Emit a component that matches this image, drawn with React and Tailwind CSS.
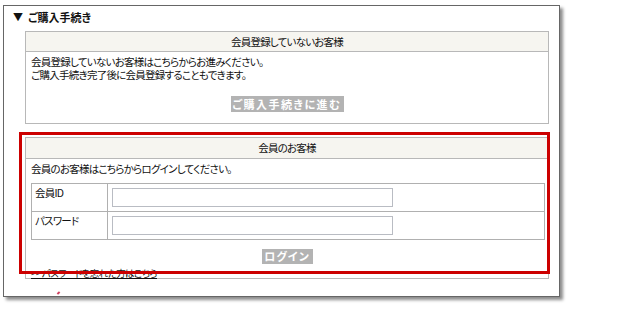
export default function App() {
  const jp = "font-['MS_PGothic','Noto_Sans_CJK_JP',sans-serif] [font-feature-settings:'palt']";
  return (
    <div className={`relative h-[309px] w-[630px] overflow-hidden bg-white text-[#111] ${jp}`}>
      <div className="ml-[3px] mt-[5px] h-[292px] w-[557px] border border-[#666] bg-white shadow-[3px_3px_3px_rgba(0,0,0,0.45)]">
        <h2 className="flex h-[25px] items-start pl-[9px] pt-[3px] text-[11px] font-bold leading-[16px]">
          <span className="mr-[5px] text-[10px]">▼</span>
          <span>ご購入手続き</span>
        </h2>

        <div className="ml-[21px] w-[524px] border border-[#b8b8b8]">
          <div className="h-[20px] border-b border-[#b8b8b8] bg-[#f6f5f0] text-center text-[10.5px] leading-[19px] tracking-[-0.8px]">
            会員登録していないお客様
          </div>
          <div className="h-[71px] px-[5px] pt-[3px] text-[10.5px] leading-[13px] tracking-[-0.75px]">
            <p>会員登録していないお客様はこちらからお進みください。</p>
            <p>ご購入手続き完了後に会員登録することもできます。</p>
            <div className="mt-[15px] flex justify-center">
              <button
                type="button"
                className="h-[16px] w-[113px] bg-[#b3b3b3] text-[11px] font-bold leading-[16px] tracking-[1.5px] text-white"
              >
                ご購入手続きに進む
              </button>
            </div>
          </div>
        </div>

        <div className="ml-[21px] mt-[13px] w-[524px] border border-[#b8b8b8]">
          <div className="h-[21px] border-b border-[#b8b8b8] bg-[#f6f5f0] text-center text-[10.5px] leading-[20px] tracking-[-0.8px]">
            会員のお客様
          </div>
          <div className="h-[119px] px-[5px] pt-[3px] text-[10.5px] tracking-[-0.75px]">
            <p className="leading-[13px]">会員のお客様はこちらからログインしてください。</p>
            <table className="mt-[8px] w-[514px] border-collapse border border-[#b0b0b0]">
              <tbody>
                {["会員ID", "パスワード"].map((label) => (
                  <tr key={label} className="h-[28px]">
                    <td className="w-[76px] border border-[#b0b0b0] px-[3px] pb-[8px] pt-[3px] align-top leading-[12px]">
                      {label}
                    </td>
                    <td className="border border-[#b0b0b0] px-[4px]">
                      <input
                        type={label === "パスワード" ? "password" : "text"}
                        className="block h-[19px] w-[281px] border border-[#b9bcc3] bg-white outline-none"
                      />
                    </td>
                  </tr>
                ))}
              </tbody>
            </table>
            <div className="mt-[9px] flex justify-center">
              <button
                type="button"
                className="h-[15px] w-[51px] bg-[#b3b3b3] text-[11px] font-bold leading-[15px] tracking-[1px] text-white"
              >
                ログイン
              </button>
            </div>
            <a href="#" className="mt-[3px] block w-fit text-[9.5px] leading-[12px] tracking-[-0.6px] text-[#111] underline">
              &gt;&gt; パスワードを忘れた方はこちら
            </a>
          </div>
        </div>

        <div className="ml-[53px] mt-[13px] h-[2px] w-[3px] rotate-[-40deg] bg-[#d04060]" />
      </div>

      <div className="pointer-events-none absolute left-[19px] top-[132px] h-[142px] w-[531px] border-[3px] border-[#cc0000]" />
    </div>
  );
}
